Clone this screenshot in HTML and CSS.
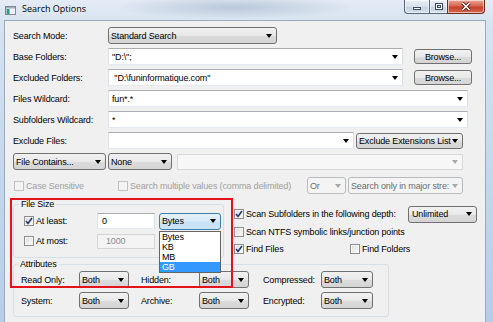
FILE: index.html
```html
<!DOCTYPE html>
<html lang="en">

<head>
    <meta charset="UTF-8">
    <meta name="viewport" content="width=device-width, initial-scale=1.0">
    <title>Search Options</title>
    <link rel="stylesheet" href="styles.css">
</head>

<body>
    <div class="window">
        <!-- title bar -->
        <div class="titlebar">
            <svg class="app-icon" width="11" height="9" viewBox="0 0 11 9">
                <rect x="0.5" y="0.5" width="10" height="8" fill="#eef2f5" stroke="#7d8894" />
                <rect x="1" y="1" width="9" height="1.5" fill="#9fb0c0" />
                <rect x="1.5" y="3" width="3" height="5" fill="#2f9b84" />
            </svg>
            <span class="title">Search Options</span>
            <div class="caption">
                <span class="cap-btn cap-min"><i></i></span>
                <span class="cap-btn cap-max"><i></i></span>
                <span class="cap-btn cap-close">
                    <svg width="10" height="9" viewBox="0 0 10 9">
                        <path d="M1.5 1 L8.5 8 M8.5 1 L1.5 8" stroke="#4a1d16" stroke-width="3.2" />
                        <path d="M1.5 1 L8.5 8 M8.5 1 L1.5 8" stroke="#fff" stroke-width="1.6" />
                    </svg>
                </span>
            </div>
        </div>

        <div class="frame">
            <div class="client">
                <div class="row">
                    <span class="label">Search Mode:</span>
                    <div class="sel w-mode">Standard Search</div>
                </div>
                <div class="row">
                    <span class="label">Base Folders:</span>
                    <div class="combo w-folder">"D:\";</div>
                    <div class="btn w-browse">Browse...</div>
                </div>
                <div class="row">
                    <span class="label">Excluded Folders:</span>
                    <div class="combo w-folder">&nbsp;"D:\funinformatique.com"</div>
                    <div class="btn w-browse">Browse...</div>
                </div>
                <div class="row">
                    <span class="label">Files Wildcard:</span>
                    <div class="combo w-wild">fun*.*</div>
                </div>
                <div class="row">
                    <span class="label">Subfolders Wildcard:</span>
                    <div class="combo w-wild">*</div>
                </div>
                <div class="row">
                    <span class="label">Exclude Files:</span>
                    <div class="combo w-excl"></div>
                    <div class="sel w-extlist">Exclude Extensions List</div>
                </div>
                <div class="row">
                    <div class="sel w-contains">File Contains...</div>
                    <div class="sel w-none">None</div>
                    <div class="combo dis w-text"></div>
                </div>
                <div class="row opts">
                    <label class="check off w-case"><span class="box"></span>Case Sensitive</label>
                    <label class="check off w-multi"><span class="box"></span>Search multiple values (comma delimited)</label>
                    <div class="sel dis w-or">Or</div>
                    <div class="sel dis w-major">Search only in major stre:</div>
                </div>

                <div class="lower">
                    <fieldset class="group size-group">
                        <legend>File Size</legend>
                        <div class="size-row">
                            <label class="check w-size"><span class="box"><svg width="8" height="8" viewBox="0 0 8 8"><path d="M1 4 L3 6.5 L7 1" stroke="#233a6a" stroke-width="1.6" fill="none" /></svg></span>At least:</label>
                            <div class="edit w-num">0</div>
                            <div class="units">
                                <div class="sel focus w-units">Bytes</div>
                                <ul class="droplist">
                                    <li>Bytes</li>
                                    <li>KB</li>
                                    <li>MB</li>
                                    <li class="hot">GB</li>
                                </ul>
                            </div>
                        </div>
                        <div class="size-row">
                            <label class="check w-size"><span class="box"></span>At most:</label>
                            <div class="edit dis w-num">1000</div>
                        </div>
                    </fieldset>

                    <div class="scan">
                        <div class="scan-row depth">
                            <label class="check"><span class="box"><svg width="8" height="8" viewBox="0 0 8 8"><path d="M1 4 L3 6.5 L7 1" stroke="#233a6a" stroke-width="1.6" fill="none" /></svg></span>Scan Subfolders in the following depth:</label>
                            <div class="sel w-depth">Unlimited</div>
                        </div>
                        <div class="scan-row">
                            <label class="check"><span class="box"></span>Scan NTFS symbolic links/junction points</label>
                        </div>
                        <div class="scan-row">
                            <label class="check w-find"><span class="box"><svg width="8" height="8" viewBox="0 0 8 8"><path d="M1 4 L3 6.5 L7 1" stroke="#233a6a" stroke-width="1.6" fill="none" /></svg></span>Find Files</label>
                            <label class="check"><span class="box"></span>Find Folders</label>
                        </div>
                    </div>

                    <fieldset class="group attr-group">
                        <legend>Attributes</legend>
                        <div class="attrs">
                            <span>Read Only:</span>
                            <div class="sel w-both">Both</div>
                            <span>Hidden:</span>
                            <div class="sel w-both">Both</div>
                            <span>Compressed:</span>
                            <div class="sel w-both2">Both</div>
                            <span>System:</span>
                            <div class="sel w-both">Both</div>
                            <span>Archive:</span>
                            <div class="sel w-both">Both</div>
                            <span>Encrypted:</span>
                            <div class="sel w-both2">Both</div>
                        </div>
                    </fieldset>

                    <!-- red highlight drawn over the screenshot -->
                    <div class="mark"></div>
                </div>
            </div>
        </div>
    </div>
</body>

</html>
```

FILE: styles.css
```css
* {
    margin: 0;
    padding: 0;
    box-sizing: border-box;
}

body {
    width: 493px;
    height: 322px;
    overflow: hidden;
    font-family: "Liberation Sans", Arial, sans-serif;
    font-size: 9px;
    letter-spacing: -0.15px;
    color: #000;
}

.window {
    width: 493px;
    height: 322px;
    display: flex;
    flex-direction: column;
    overflow: hidden;
    background: linear-gradient(to bottom, #d9e5f2 0%, #c9dbee 40%, #b4cde9 100%);
}

/* title bar */
.titlebar {
    height: 20px;
    display: flex;
    align-items: flex-start;
    background:
        radial-gradient(ellipse 120px 12px at 235px 7px, rgba(140, 160, 185, 0.45), rgba(140, 160, 185, 0)),
        linear-gradient(to bottom, #e4ecf6, #d8e4f0);
}

.app-icon {
    margin: 6px 0 0 5px;
    flex: none;
}

.title {
    font-family: "Open Sans", "Liberation Sans", sans-serif;
    font-size: 9px;
    letter-spacing: 0;
    line-height: 12px;
    margin: 3px 0 0 6px;
}

.caption {
    display: flex;
    height: 14px;
    margin-left: auto;
    margin-right: 8px;
}

.cap-btn {
    display: flex;
    align-items: center;
    justify-content: center;
    border: 1px solid #56667c;
    border-top: none;
    box-shadow: inset 0 0 0 1px rgba(255, 255, 255, 0.55);
    background: linear-gradient(to bottom, #eaf0f7, #d7e0eb 50%, #c6d2e0 51%, #d3dfec);
}

.cap-min {
    width: 25px;
    border-right: none;
    border-bottom-left-radius: 4px;
}

.cap-min i {
    width: 8px;
    height: 3px;
    margin-top: 3px;
    background: #fff;
    border: 1px solid #3b4a5e;
}

.cap-max {
    width: 18px;
    border-right: none;
}

.cap-max i {
    width: 8px;
    height: 7px;
    border: 1px solid #3b4a5e;
    box-shadow: inset 0 0 0 1px #fff, inset 0 0 0 2px #3b4a5e;
}

.cap-close {
    width: 38px;
    border-color: #6e2b20;
    border-bottom-right-radius: 4px;
    background: linear-gradient(to bottom, #e9a797, #d9664f 45%, #c6412c 55%, #d5694f);
}

/* window frame + client area */
.frame {
    flex: 1;
    display: flex;
    padding: 0 7px 0 4px;
}

.client {
    flex: 1;
    background: #f0f0f0;
    border: 1px solid #9aabbf;
    border-bottom: none;
    padding: 4px 0 0 8px;
}

.row {
    display: flex;
    align-items: center;
    height: 21px;
}

.row.opts {
    margin-top: 3px;
}

.label {
    width: 95px;
    flex: none;
}

/* controls */
.sel,
.combo,
.btn,
.edit {
    display: flex;
    align-items: center;
    flex: none;
    height: 17px;
    padding-left: 2px;
    white-space: nowrap;
    overflow: hidden;
}

.sel,
.btn {
    border: 1px solid #707070;
    border-radius: 3px;
    background: linear-gradient(to bottom, #f2f2f2, #e8e8e8 50%, #dcdcdc 51%, #d4d4d4);
}

.btn {
    justify-content: center;
    padding-left: 0;
    height: 15px;
}

.combo,
.edit {
    background: #fff;
    border: 1px solid;
    border-color: #abadb3 #dbdfe6 #e3e9ef #e2e3ea;
}

.combo {
    padding-left: 3px;
}

.sel::after,
.combo::after {
    content: "";
    margin-left: auto;
    margin-right: 4px;
    border-left: 3.5px solid transparent;
    border-right: 3.5px solid transparent;
    border-top: 4px solid #000;
}

.combo.dis {
    background: #f7f7f7;
    border-color: #d9d9d9;
    height: 16px;
}

.combo.dis::after {
    border-top-color: #a8a8a8;
}

.sel.dis {
    background: #f4f4f4;
    border-color: #b8bcbf;
    color: #6d6d6d;
}

.sel.dis::after {
    border-top-color: #a8a8a8;
}

.sel.focus {
    border-color: #3c7fb1;
    background: linear-gradient(to bottom, #e8f3fa, #d3e8f6 50%, #c5e1f4 51%, #cde5f5);
}

.edit.dis {
    background: #f4f4f4;
    border-color: #d5d5d5;
    color: #8d8d8d;
    height: 15px;
    padding-left: 8px;
}

.w-mode { width: 169px; }
.w-folder { width: 295px; }
.w-browse { width: 58px; margin-left: 11px; }
.w-wild { width: 360px; }
.w-excl { width: 246px; }
.w-extlist { width: 107px; margin-left: 2px; height: 16px; }
.w-contains { width: 93px; }
.w-none { width: 64px; margin-left: 2px; }
.w-text { width: 286px; margin-left: 5px; }
.w-or { width: 39px; }
.w-major { width: 115px; margin-left: 2px; }
.w-num { width: 58px; height: 16px; padding-left: 4px; }
.w-units { width: 62px; }
.w-depth { width: 69px; margin-left: auto; height: 17px; padding-left: 3px; }
.w-both { width: 50px; }
.w-both2 { width: 52px; }

/* checkboxes */
.check {
    display: flex;
    align-items: center;
    gap: 2px;
    white-space: nowrap;
}

.check.off {
    color: #a0a0a0;
}

.box {
    width: 10px;
    height: 10px;
    flex: none;
    display: flex;
    align-items: center;
    justify-content: center;
    border: 1px solid #8e8f8f;
    background: linear-gradient(135deg, #dcdcdc, #fbfbfb);
    box-shadow: inset 0 0 0 1px #f4f4f4;
}

.check.off .box {
    border-color: #c2c2c2;
    background: #f4f4f4;
    box-shadow: none;
}

.w-case {
    width: 104px;
    margin-left: 1px;
}

.w-multi {
    width: 189px;
}

/* lower part */
.lower {
    position: relative;
    display: grid;
    grid-template-columns: 211px 243px;
    grid-template-rows: 62px auto;
    column-gap: 10px;
}

.group {
    border: 1px solid #d5dfe5;
    border-radius: 3px;
    min-width: 0;
}

.group legend {
    font-size: 9px;
    padding: 0 2px;
}

.size-group {
    margin-top: 2px;
    padding: 1px 2px 6px 10px;
}

.size-group legend {
    line-height: 12px;
    margin-left: -5px;
}

.size-row {
    display: flex;
    align-items: center;
    height: 20px;
}

.w-size {
    width: 73px;
}

.units {
    position: relative;
    margin-left: 4px;
}

.droplist {
    position: absolute;
    top: 18px;
    left: 0;
    width: 62px;
    list-style: none;
    background: #fff;
    border: 1px solid #646464;
}

.droplist li {
    height: 10px;
    line-height: 10px;
    padding-left: 2px;
}

.droplist li.hot {
    background: #3399ff;
    color: #fff;
}

.scan {
    padding-top: 9px;
}

.scan-row {
    display: flex;
    align-items: center;
    height: 17px;
}

.scan-row.depth {
    height: 18px;
}

.w-find {
    width: 116px;
}

.attr-group {
    grid-column: 1 / -1;
    width: 376px;
    margin-top: 1px;
    padding: 0 0 5px 7px;
}

.attr-group legend {
    line-height: 10px;
    margin-left: -3px;
}

.attrs {
    display: grid;
    grid-template-columns: 58px 62px 58px 64px 58px 52px;
    grid-auto-rows: 21px;
    align-items: center;
}

.mark {
    position: absolute;
    left: -3px;
    top: 2px;
    width: 223px;
    height: 90px;
    border: 2px solid #e6121b;
}
```
